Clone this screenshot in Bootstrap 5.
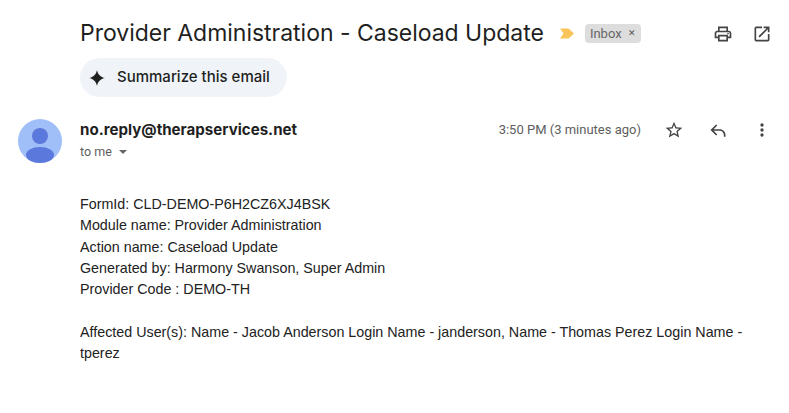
<!DOCTYPE html>
<html lang="en">
<head>
<meta charset="utf-8">
<title>Provider Administration - Caseload Update</title>
<link rel="stylesheet" href="https://cdn.jsdelivr.net/npm/bootstrap@5.3.0/dist/css/bootstrap.min.css">
<style>
html,body{height:100%;overflow:hidden;background:#fff}
body{font-family:"Liberation Sans",Arial,sans-serif;color:#222}
.mail-wrap{padding:16px 0 0 18px}
.mail-main{padding-left:62px;padding-right:17px}
.subject-row{height:35px}
.subject{font-family:Inter,Roboto,sans-serif;font-size:23px;font-weight:400;color:#1f1f1f;margin:0;letter-spacing:-.02px;line-height:35px}
.imp{margin-left:16px;margin-right:11px}
.inbox-chip{background:#ddd;color:#666;font-family:Roboto,sans-serif;font-size:13px;height:19px;line-height:19px;padding:0 5px;border-radius:4px;gap:6px}
.chip-x{font-size:9px;color:#555}
.top-icons{gap:19px}
.sum-btn{background:#f0f4f9;color:#1f1f1f;font-family:Inter,Roboto,sans-serif;font-size:15px;font-weight:500;height:39px;border-radius:20px;padding:0 16px 0 9px;gap:12px;margin-top:7px;width:207px;border:0;white-space:nowrap}
.head-row{margin-top:22px;padding-right:18px}
.avatar{width:44px;height:44px;flex:none;margin-right:18px}
.sender{font-family:Inter,Roboto,sans-serif;font-weight:700;font-size:15.1px;color:#1f1f1f;line-height:20px;margin-top:1px}
.to-me{font-family:Roboto,sans-serif;font-size:12.5px;color:#5e5e5e;line-height:16px;margin-top:4px}
.caret-d{display:inline-block;border-left:4px solid transparent;border-right:4px solid transparent;border-top:4px solid #666;margin-left:7px;vertical-align:2px}
.when{font-family:Roboto,sans-serif;font-size:13px;color:#5e5e5e;line-height:22px}
.act-icons{gap:24px;margin-left:23px;margin-right:-1px;margin-top:1px}
.mail-body{margin:31px 0 0 62px;padding-right:34px;font-size:14.3px;line-height:21.3px;color:#222}
.mail-body p{margin:0}
.gap-line{height:21.6px}
</style>
</head>
<body>
<div class="mail-wrap">
  <div class="mail-main">
    <div class="subject-row d-flex align-items-center">
      <h1 class="subject">Provider Administration - Caseload Update</h1>
      <svg class="imp" width="14" height="11" viewBox="0 0 14 11" aria-hidden="true"><path d="M0 .5h8.500L14 5.500 8.500 10.500H0L3.500 5.500z" fill="#f9c559"/></svg>
      <span class="inbox-chip d-inline-flex align-items-center">Inbox <span class="chip-x">&#x2715;</span></span>
      <div class="top-icons d-flex align-items-center ms-auto">
        <svg width="20" height="20" viewBox="0 0 24 24" fill="#444" aria-hidden="true"><path d="M19 8h-1V3H6v5H5c-1.660 0-3 1.340-3 3v6h4v4h12v-4h4v-6c0-1.660-1.340-3-3-3zM8 5h8v3H8V5zm8 14H8v-4h8v4zm4-4h-2v-2H6v2H4v-4c0-.55.45-1 1-1h14c.55 0 1 .45 1 1v4z"/><circle cx="18" cy="11.500" r="1"/></svg>
        <svg width="20" height="20" viewBox="0 0 24 24" fill="#444" aria-hidden="true"><path d="M19 19H5V5h7V3H5a2 2 0 0 0-2 2v14a2 2 0 0 0 2 2h14c1.100 0 2-.9 2-2v-7h-2v7zM14 3v2h3.590l-9.830 9.830 1.410 1.410L19 6.410V10h2V3h-7z"/></svg>
      </div>
    </div>
    <button type="button" class="btn sum-btn d-inline-flex align-items-center">
      <svg width="16" height="16" viewBox="0 0 16 16" aria-hidden="true"><path d="M8 0C8.700 4.300 11.700 7.300 16 8 11.700 8.700 8.700 11.700 8 16 7.300 11.700 4.300 8.700 0 8 4.300 7.300 7.300 4.300 8 0z" fill="#1f1f1f"/></svg>
      Summarize this email
    </button>
  </div>
  <div class="head-row d-flex">
    <svg class="avatar" viewBox="0 0 44 44" aria-hidden="true"><circle cx="22" cy="22" r="22" fill="#a0bff8"/><circle cx="22" cy="17" r="8" fill="#5b78dc"/><ellipse cx="22" cy="36" rx="14" ry="8" fill="#5b78dc"/></svg>
    <div class="flex-grow-1">
      <div class="sender">no.reply@therapservices.net</div>
      <div class="to-me">to me<span class="caret-d"></span></div>
    </div>
    <div class="d-flex align-items-start">
      <span class="when">3:50 PM (3 minutes ago)</span>
      <div class="act-icons d-flex align-items-center">
        <svg width="20" height="20" viewBox="0 0 24 24" fill="#444" aria-hidden="true"><path d="M22 9.240l-7.190-.62L12 2 9.190 8.630 2 9.240l5.460 4.730L5.820 21 12 17.270 18.180 21l-1.630-7.030L22 9.240zM12 15.400l-3.760 2.270 1-4.280-3.320-2.880 4.380-.38L12 6.100l1.710 4.040 4.380.38-3.320 2.880 1 4.280L12 15.400z"/></svg>
        <svg width="20" height="20" viewBox="0 0 24 24" fill="#444" aria-hidden="true"><path d="M9.700 5.300l1.400 1.400L6.800 11H14c3.900 0 7 3.100 7 7v2h-2v-2c0-2.800-2.200-5-5-5H6.800l4.300 4.300-1.400 1.400L3 12z"/></svg>
        <svg width="20" height="20" viewBox="0 0 24 24" fill="#444" aria-hidden="true"><circle cx="12" cy="6" r="2"/><circle cx="12" cy="12" r="2"/><circle cx="12" cy="18" r="2"/></svg>
      </div>
    </div>
  </div>
  <div class="mail-body">
    <p>FormId: CLD-DEMO-P6H2CZ6XJ4BSK</p>
    <p>Module name: Provider Administration</p>
    <p>Action name: Caseload Update</p>
    <p>Generated by: Harmony Swanson, Super Admin</p>
    <p>Provider Code : DEMO-TH</p>
    <div class="gap-line"></div>
    <p>Affected User(s): Name - Jacob Anderson Login Name - janderson, Name - Thomas Perez Login Name - tperez</p>
  </div>
</div>
<script src="https://cdn.jsdelivr.net/npm/bootstrap@5.3.0/dist/js/bootstrap.bundle.min.js"></script>
</body>
</html>
